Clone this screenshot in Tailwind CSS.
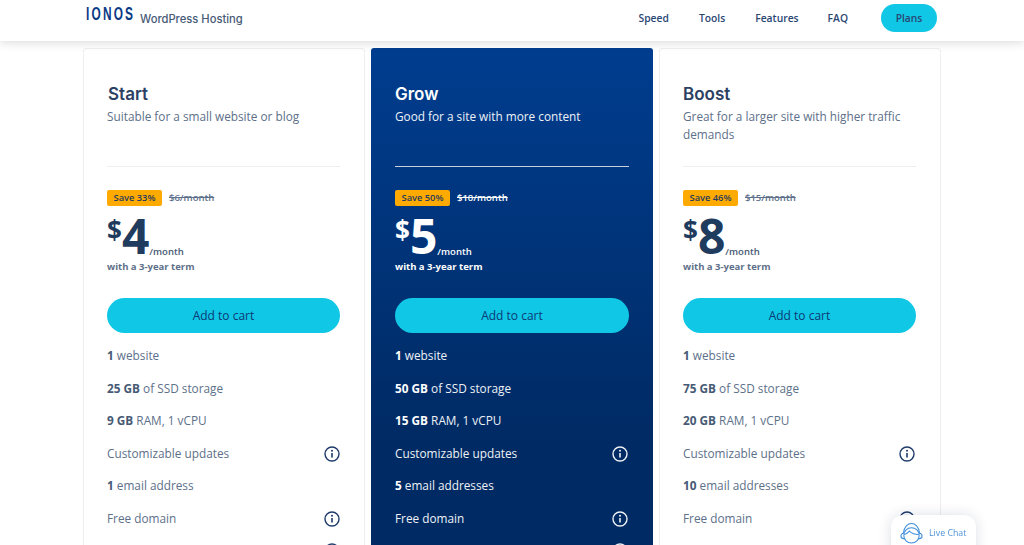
<!doctype html>
<html><head><meta charset="utf-8"><script src="https://cdn.jsdelivr.net/npm/@tailwindcss/browser@4"></script></head>
<body class="h-[545px] w-[1024px] overflow-hidden bg-white font-['Open_Sans',sans-serif] text-[#465a75]">
<header class="relative z-10 flex h-[41px] items-start bg-white pr-[87px] pl-[86px] shadow-[0_1px_10px_rgba(0,0,0,0.16)]">
  <div class="flex items-start">
    <span class="mt-[3px] block w-[48px] origin-left [transform:scaleX(0.66)] font-['Liberation_Sans',sans-serif] text-[18px] leading-[22px] font-bold tracking-[3.3px] whitespace-nowrap text-[#0b3a85]">IONOS</span>
    <span class="mt-[8px] ml-[6px] font-['Inter',sans-serif] text-[11.2px] leading-[22px] font-medium whitespace-nowrap text-[#465a75]">WordPress Hosting</span>
  </div>
  <nav class="mt-[4px] ml-auto flex h-[28px] items-center text-[10.3px] font-semibold text-[#2a4673]">
    <a class="mr-[30px] pt-[1px]">Speed</a><a class="mr-[30px] pt-[1px]">Tools</a><a class="mr-[29px] pt-[1px]">Features</a><a class="mr-[33px] pt-[1px]">FAQ</a>
    <a class="flex h-[28px] w-[56px] items-center justify-center rounded-full bg-[#11c7e6] pt-[1px]">Plans</a>
  </nav>
</header>
<main class="mt-[7px] ml-[83px] grid w-[858px] grid-cols-3 gap-[6px]">

  <section class="h-[700px] rounded-t-[3px] border border-[#efefef] bg-white pt-[34px] pr-[24px] pl-[23px]">
    <h2 class="ml-[1px] font-['Inter',sans-serif] text-[17px] leading-[22px] font-semibold text-[#2b4163]">Start</h2>
    <p class="mt-[2px] h-[59px] text-[11.8px] leading-[18px] text-[#5d7089]">Suitable for a small website or blog</p>
    <div class="border-t border-[#eeeeee]"></div>
    <div class="mt-[23px] flex items-center gap-[7px]">
      <span class="flex h-[16px] w-[55px] items-center justify-center rounded-[2px] bg-[#ffaa00] text-[9.3px] font-semibold text-[#1f3b5e]">Save 33%</span>
      <span class="text-[9.5px] font-semibold text-[#5d7089] line-through">$6/month</span>
    </div>
    <div class="mt-[6px] flex h-[50px] items-end font-bold text-[#1f3b5e]">
      <span class="mb-[17px] text-[26px] leading-[30px]">$</span><span class="mb-[6px] text-[48px] leading-[40px]">4</span><span class="mb-[3px] text-[9.5px] leading-[14px] font-semibold text-[#465a75]">/month</span>
    </div>
    <p class="-mt-[2px] text-[9.5px] leading-[14px] font-bold text-[#5d7089]">with a 3-year term</p>
    <button class="mt-[24px] flex h-[35px] w-full items-center justify-center rounded-full bg-[#11c7e6] text-[12px] font-medium text-[#0b3a75]">Add to cart</button>
    <ul class="mt-[7px] text-[11.8px] text-[#5d7089]">
      <li class="flex h-[32.5px] items-center"><span><b class="font-bold text-[#465a75]">1</b> website</span></li>
      <li class="flex h-[32.5px] items-center"><span><b class="font-bold text-[#465a75]">25 GB</b> of SSD storage</span></li>
      <li class="flex h-[32.5px] items-center"><span><b class="font-bold text-[#465a75]">9 GB</b> RAM, 1 vCPU</span></li>
      <li class="flex h-[32.5px] items-center justify-between"><span>Customizable updates</span><svg class="size-[16px] text-[#1f3b6b]" viewBox="0 0 16 16" fill="none" stroke="currentColor"><circle cx="8" cy="8" r="7" stroke-width="1.4"/><path d="M8 7v4.500" stroke-width="1.600"/><circle cx="8" cy="4.700" r="1" fill="currentColor" stroke="none"/></svg></li>
      <li class="flex h-[32.5px] items-center"><span><b class="font-bold text-[#465a75]">1</b> email address</span></li>
      <li class="flex h-[32.5px] items-center justify-between"><span>Free domain</span><svg class="size-[16px] text-[#1f3b6b]" viewBox="0 0 16 16" fill="none" stroke="currentColor"><circle cx="8" cy="8" r="7" stroke-width="1.4"/><path d="M8 7v4.500" stroke-width="1.600"/><circle cx="8" cy="4.700" r="1" fill="currentColor" stroke="none"/></svg></li>
      <li class="flex h-[32.5px] items-center justify-end"><svg class="size-[16px] text-[#1f3b6b]" viewBox="0 0 16 16" fill="none" stroke="currentColor"><circle cx="8" cy="8" r="7" stroke-width="1.4"/><path d="M8 7v4.500" stroke-width="1.600"/><circle cx="8" cy="4.700" r="1" fill="currentColor" stroke="none"/></svg></li>
    </ul>
  </section>

  <section class="h-[700px] rounded-t-[3px] bg-[linear-gradient(180deg,#003d8f_0px,#002a63_400px)] px-[24px] pt-[35px] text-white">
    <h2 class="font-['Inter',sans-serif] text-[17px] leading-[22px] font-semibold">Grow</h2>
    <p class="mt-[2px] h-[59px] text-[11.8px] leading-[18px] text-[#eef2f7]">Good for a site with more content</p>
    <div class="border-t border-[#c5cfdd]"></div>
    <div class="mt-[23px] flex items-center gap-[7px]">
      <span class="flex h-[16px] w-[55px] items-center justify-center rounded-[2px] bg-[#ffaa00] text-[9.3px] font-semibold text-[#1f3b5e]">Save 50%</span>
      <span class="text-[9.5px] font-semibold text-white line-through">$10/month</span>
    </div>
    <div class="mt-[6px] flex h-[50px] items-end font-bold">
      <span class="mb-[17px] text-[26px] leading-[30px]">$</span><span class="mb-[6px] text-[48px] leading-[40px]">5</span><span class="mb-[3px] text-[9.5px] leading-[14px] font-semibold">/month</span>
    </div>
    <p class="-mt-[2px] text-[9.5px] leading-[14px] font-bold">with a 3-year term</p>
    <button class="mt-[24px] flex h-[35px] w-full items-center justify-center rounded-full bg-[#11c7e6] text-[12px] font-medium text-[#0b3a75]">Add to cart</button>
    <ul class="mt-[7px] text-[11.8px] text-[#eef2f7]">
      <li class="flex h-[32.5px] items-center"><span><b class="font-bold text-white">1</b> website</span></li>
      <li class="flex h-[32.5px] items-center"><span><b class="font-bold text-white">50 GB</b> of SSD storage</span></li>
      <li class="flex h-[32.5px] items-center"><span><b class="font-bold text-white">15 GB</b> RAM, 1 vCPU</span></li>
      <li class="flex h-[32.5px] items-center justify-between"><span>Customizable updates</span><svg class="mr-[1px] size-[16px]" viewBox="0 0 16 16" fill="none" stroke="currentColor"><circle cx="8" cy="8" r="7" stroke-width="1.4"/><path d="M8 7v4.500" stroke-width="1.600"/><circle cx="8" cy="4.700" r="1" fill="currentColor" stroke="none"/></svg></li>
      <li class="flex h-[32.5px] items-center"><span><b class="font-bold text-white">5</b> email addresses</span></li>
      <li class="flex h-[32.5px] items-center justify-between"><span>Free domain</span><svg class="mr-[1px] size-[16px]" viewBox="0 0 16 16" fill="none" stroke="currentColor"><circle cx="8" cy="8" r="7" stroke-width="1.4"/><path d="M8 7v4.500" stroke-width="1.600"/><circle cx="8" cy="4.700" r="1" fill="currentColor" stroke="none"/></svg></li>
      <li class="flex h-[32.5px] items-center justify-end"><svg class="mr-[1px] size-[16px]" viewBox="0 0 16 16" fill="none" stroke="currentColor"><circle cx="8" cy="8" r="7" stroke-width="1.4"/><path d="M8 7v4.500" stroke-width="1.600"/><circle cx="8" cy="4.700" r="1" fill="currentColor" stroke="none"/></svg></li>
    </ul>
  </section>

  <section class="h-[700px] rounded-t-[3px] border border-[#efefef] bg-white pt-[34px] pr-[24px] pl-[23px]">
    <h2 class="font-['Inter',sans-serif] text-[17px] leading-[22px] font-semibold text-[#2b4163]">Boost</h2>
    <p class="mt-[2px] h-[59px] text-[11.8px] leading-[18px] text-[#5d7089]">Great for a larger site with higher traffic<br>demands</p>
    <div class="border-t border-[#eeeeee]"></div>
    <div class="mt-[23px] flex items-center gap-[7px]">
      <span class="flex h-[16px] w-[55px] items-center justify-center rounded-[2px] bg-[#ffaa00] text-[9.3px] font-semibold text-[#1f3b5e]">Save 46%</span>
      <span class="text-[9.5px] font-semibold text-[#5d7089] line-through">$15/month</span>
    </div>
    <div class="mt-[6px] flex h-[50px] items-end font-bold text-[#1f3b5e]">
      <span class="mb-[17px] text-[26px] leading-[30px]">$</span><span class="mb-[6px] text-[48px] leading-[40px]">8</span><span class="mb-[3px] text-[9.5px] leading-[14px] font-semibold text-[#465a75]">/month</span>
    </div>
    <p class="-mt-[2px] text-[9.5px] leading-[14px] font-bold text-[#5d7089]">with a 3-year term</p>
    <button class="mt-[24px] flex h-[35px] w-full items-center justify-center rounded-full bg-[#11c7e6] text-[12px] font-medium text-[#0b3a75]">Add to cart</button>
    <ul class="mt-[7px] text-[11.8px] text-[#5d7089]">
      <li class="flex h-[32.5px] items-center"><span><b class="font-bold text-[#465a75]">1</b> website</span></li>
      <li class="flex h-[32.5px] items-center"><span><b class="font-bold text-[#465a75]">75 GB</b> of SSD storage</span></li>
      <li class="flex h-[32.5px] items-center"><span><b class="font-bold text-[#465a75]">20 GB</b> RAM, 1 vCPU</span></li>
      <li class="flex h-[32.5px] items-center justify-between"><span>Customizable updates</span><svg class="mr-[1px] size-[16px] text-[#1f3b6b]" viewBox="0 0 16 16" fill="none" stroke="currentColor"><circle cx="8" cy="8" r="7" stroke-width="1.4"/><path d="M8 7v4.500" stroke-width="1.600"/><circle cx="8" cy="4.700" r="1" fill="currentColor" stroke="none"/></svg></li>
      <li class="flex h-[32.5px] items-center"><span><b class="font-bold text-[#465a75]">10</b> email addresses</span></li>
      <li class="flex h-[32.5px] items-center justify-between"><span>Free domain</span><svg class="mr-[1px] size-[16px] text-[#1f3b6b]" viewBox="0 0 16 16" fill="none" stroke="currentColor"><circle cx="8" cy="8" r="7" stroke-width="1.4"/><path d="M8 7v4.500" stroke-width="1.600"/><circle cx="8" cy="4.700" r="1" fill="currentColor" stroke="none"/></svg></li>
    </ul>
  </section>
</main>
<div class="fixed top-[515px] left-[891px] z-20 flex h-[60px] w-[85px] items-start gap-[6px] rounded-[12px] bg-white pt-[7px] pl-[9px] shadow-[0_0_14px_rgba(0,30,80,0.14)]">
  <svg class="size-[23px] text-[#3f8fdc]" viewBox="0 0 24 24" fill="none" stroke="currentColor" stroke-width="1.100"><circle cx="12" cy="14" r="8"/><path d="M4.200 13c2.800-.3 4.300-2 5.600-3.500 2 2 5.200 3.500 10 3.500"/><path d="M4 11.500C1.800 12 .8 13.300 1 15c.2 1.500 1.600 2.500 3.500 2.300M20 11.500c2.200.5 3.200 1.800 3 3.500-.2 1.500-1.600 2.500-3.500 2.300"/><path d="M3.500 12C4 4.500 8.500 1.500 12 1.500S20 4.500 20.500 12"/></svg>
  <span class="mt-[5px] text-[8.8px] leading-[12px] whitespace-nowrap text-[#4f94d8]">Live Chat</span>
</div>
</body></html>
